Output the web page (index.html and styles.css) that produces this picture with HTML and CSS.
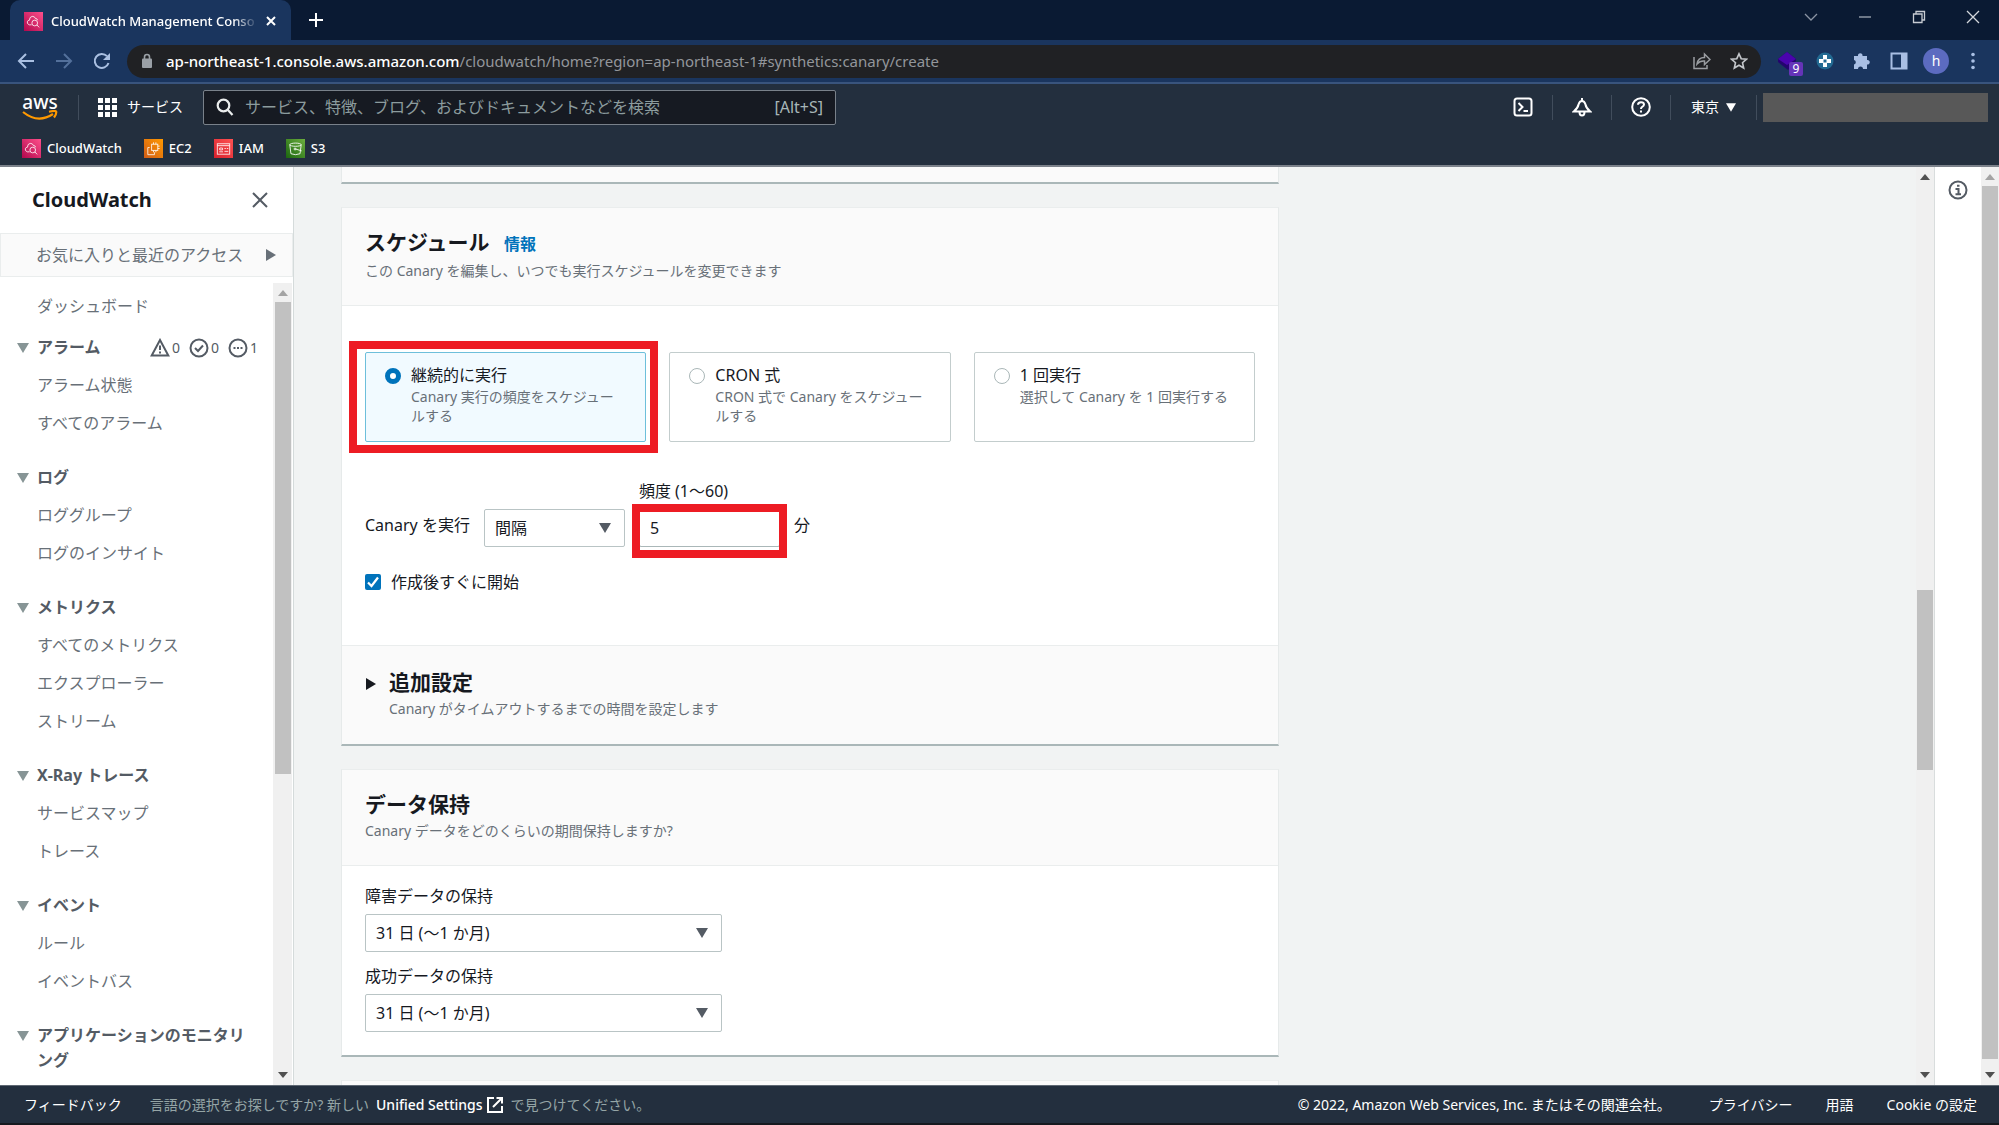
FILE: index.html
```html
<!DOCTYPE html>
<html lang="ja">
<head>
<meta charset="utf-8">
<meta name="viewport" content="width=device-width, initial-scale=1">
<title>CloudWatch Management Console</title>
<link rel="stylesheet" href="styles.css">
</head>
<body>
<svg class="defs" width="0" height="0" aria-hidden="true">
  <defs>
    <linearGradient id="g-pink" x1="0" y1="1" x2="1" y2="0"><stop offset="0" stop-color="#b0084d"/><stop offset="1" stop-color="#ff4f8b"/></linearGradient>
    <linearGradient id="g-orange" x1="0" y1="1" x2="1" y2="0"><stop offset="0" stop-color="#d05c17"/><stop offset="1" stop-color="#ff9900"/></linearGradient>
    <linearGradient id="g-red" x1="0" y1="1" x2="1" y2="0"><stop offset="0" stop-color="#d6202c"/><stop offset="1" stop-color="#ff5252"/></linearGradient>
    <linearGradient id="g-green" x1="0" y1="1" x2="1" y2="0"><stop offset="0" stop-color="#1b660f"/><stop offset="1" stop-color="#6cae3e"/></linearGradient>
    <symbol id="i-cloudwatch" viewBox="0 0 20 20">
      <rect width="20" height="20" fill="url(#g-pink)"/>
      <g fill="none" stroke="#fff" stroke-opacity=".85" stroke-width="1"><path d="M8 13.500H5.500Q3 12.500 3.500 10.300Q4 8.600 5.800 8.600Q5.600 5.200 8.600 4.600Q11.300 4.400 12.200 7Q14 6.600 14.300 8.700"/><circle cx="11.300" cy="11.600" r="3"/><path d="M13.600 13.600L16 16.200"/></g>
    </symbol>
    <symbol id="i-ec2" viewBox="0 0 20 20">
      <rect width="20" height="20" fill="url(#g-orange)"/>
      <g fill="none" stroke="#fff" stroke-opacity=".85"><rect x="8" y="5.500" width="6.500" height="6.500"/><path d="M6 9H4V16.500H11V14M10 3.500V5.500M12.500 3.500V5.500M14.500 7.500H16.500M14.500 10H16.500M10 12V14M12.500 12V14"/></g>
    </symbol>
    <symbol id="i-iam" viewBox="0 0 20 20">
      <rect width="20" height="20" fill="url(#g-red)"/>
      <g fill="none" stroke="#fff" stroke-opacity=".85"><rect x="3.500" y="5" width="13" height="11"/><path d="M3.500 7H16.500M6 9.500H9V11.500H6ZM5.500 13.500H9.500M11 10H12.500M13.500 10H15M11 13H15"/></g>
    </symbol>
    <symbol id="i-s3" viewBox="0 0 20 20">
      <rect width="20" height="20" fill="url(#g-green)"/>
      <g fill="none" stroke="#fff" stroke-opacity=".9"><ellipse cx="10" cy="6" rx="6" ry="1.700"/><path d="M4 6L5.200 15.500Q10 17.500 14.800 15.500L16 6M10 10.500L16.500 12.500"/><circle cx="9.500" cy="10.500" r="1"/></g>
    </symbol>
    <symbol id="i-down" viewBox="0 0 12 10"><path d="M0 0H12L6 10Z" fill="currentColor"/></symbol>
    <symbol id="i-right" viewBox="0 0 10 12"><path d="M0 0V12L10 6Z" fill="currentColor"/></symbol>
    <symbol id="i-sbup" viewBox="0 0 10 6"><path d="M5 0L10 6H0Z" fill="currentColor"/></symbol>
    <symbol id="i-sbdown" viewBox="0 0 10 6"><path d="M5 6L10 0H0Z" fill="currentColor"/></symbol>
  </defs>
</svg>

<header class="browser">
  <div class="tabstrip">
    <div class="tab">
      <svg width="19" height="19"><use href="#i-cloudwatch"/></svg>
      <span class="tab-title">CloudWatch Management Conso</span>
      <button class="plain" aria-label="タブを閉じる"><svg width="10" height="10" viewBox="0 0 10 10" stroke="#fff" stroke-width="2"><path d="M1 1L9 9M9 1L1 9"/></svg></button>
    </div>
    <button class="plain newtab" aria-label="新しいタブ"><svg width="14" height="14" viewBox="0 0 14 14" stroke="#fff" stroke-width="2"><path d="M7 0V14M0 7H14"/></svg></button>
    <div class="winbtns">
      <button class="plain" aria-label="タブを検索"><svg width="14" height="14" viewBox="0 0 14 14" fill="none" stroke="#8b94a4" stroke-width="1.300"><path d="M1 4L7 10L13 4"/></svg></button>
      <button class="plain" aria-label="最小化"><svg width="14" height="14" viewBox="0 0 14 14" stroke="#a3aab5" stroke-width="1.300"><path d="M1 7H13"/></svg></button>
      <button class="plain" aria-label="元に戻す"><svg width="14" height="14" viewBox="0 0 14 14" fill="none" stroke="#c8ccd3" stroke-width="1.300"><path d="M1.500 4H10V12.500H1.500ZM4 4V1.500H12.500V10H10"/></svg></button>
      <button class="plain" aria-label="閉じる"><svg width="14" height="14" viewBox="0 0 14 14" stroke="#d4d7dc" stroke-width="1.300"><path d="M1 1L13 13M13 1L1 13"/></svg></button>
    </div>
  </div>
  <div class="toolbar">
    <button class="plain" aria-label="戻る"><svg width="18" height="18" viewBox="0 0 18 18" fill="none" stroke="#aac0e2" stroke-width="2"><path d="M17 9H3M9 2L2 9L9 16"/></svg></button>
    <button class="plain" aria-label="進む"><svg width="18" height="18" viewBox="0 0 18 18" fill="none" stroke="#53709b" stroke-width="2"><path d="M1 9H15M9 2L16 9L9 16"/></svg></button>
    <button class="plain" aria-label="再読み込み"><svg width="18" height="18" viewBox="0 0 18 18"><path d="M15.500 11A7 7 0 1 1 14 4.200" fill="none" stroke="#aac0e2" stroke-width="2"/><path d="M17 1V8H10Z" fill="#aac0e2"/></svg></button>
    <div class="omnibox">
      <svg width="12" height="16" viewBox="0 0 12 16"><rect x="1" y="5.500" width="10" height="9.500" rx="1" fill="#9aa0a6"/><path d="M3.500 6V4A2.500 2.500 0 0 1 8.500 4V6" fill="none" stroke="#9aa0a6" stroke-width="1.600"/></svg>
      <span class="url"><span class="host">ap-northeast-1.console.aws.amazon.com</span>/cloudwatch/home?region=ap-northeast-1#synthetics:canary/create</span>
      <button class="plain" aria-label="共有"><svg width="18" height="18" viewBox="0 0 18 18" fill="none" stroke="#9a9da1" stroke-width="1.500"><path d="M1 5V16.500H14V13M4 12Q5 5.500 11.500 5.500V2L17 7.500L11.500 12.500V9Q7 8.500 4 12Z"/></svg></button>
      <button class="plain" aria-label="ブックマーク"><svg width="18" height="18" viewBox="0 0 18 18" fill="none" stroke="#c3c6ca" stroke-width="1.600"><path d="M9 1.800L11.200 6.700L16.500 7.200L12.500 10.700L13.700 16L9 13.200L4.300 16L5.500 10.700L1.500 7.200L6.800 6.700Z"/></svg></button>
    </div>
    <div class="exts">
      <span class="ext"><svg width="20" height="20" viewBox="0 0 20 20"><path d="M1 8L10 1L19 8L19 10L11 19L1 11Z" fill="#24046e"/><path d="M1 8L10 1L19 8L10 14Z" fill="#4a04ae"/></svg><span class="ext-badge">9</span></span>
      <svg width="18" height="18" viewBox="0 0 18 18"><circle cx="9" cy="9" r="8.500" fill="#236a92"/><path d="M7 3H11V7H15V11H11V15H7V11H3V7H7Z" fill="#fff"/><rect x="7.500" y="7.500" width="3" height="3" fill="#236a92"/></svg>
      <svg width="18" height="18" viewBox="0 0 18 18" fill="#a9bfe4"><path d="M1 4H5A2.300 2.300 0 1 1 9.500 4H14V8A2.300 2.300 0 1 1 14 12.500V17H10A2.500 2.500 0 0 0 5 17H1V12.500A2.300 2.300 0 0 0 1 8Z"/></svg>
      <svg width="18" height="18" viewBox="0 0 18 18"><rect x="1.500" y="1.500" width="15" height="15" fill="none" stroke="#a9bfe4" stroke-width="2"/><rect x="11" y="1" width="6" height="16" fill="#a9bfe4"/></svg>
      <span class="avatar">h</span>
      <svg width="18" height="18" viewBox="0 0 18 18" fill="#a9bfe4"><circle cx="9" cy="2.500" r="1.800"/><circle cx="9" cy="9" r="1.800"/><circle cx="9" cy="15.500" r="1.800"/></svg>
    </div>
  </div>
</header>

<nav class="awsnav">
  <div class="navrow">
    <a class="logo" href="#"><span>aws</span><svg width="36" height="11" viewBox="0 0 36 11" fill="none" stroke="#f90" stroke-width="2.200"><path d="M1 2Q16 14 31 4M27 1.800Q34 .2 34.200 1.800Q34.600 4 32 7.500"/></svg></a>
    <span class="vr"></span>
    <button class="plain services"><svg width="19" height="19" viewBox="0 0 19 19" fill="#fff"><path d="M0 0H5V5H0ZM7 0H12V5H7ZM14 0H19V5H14ZM0 7H5V12H0ZM7 7H12V12H7ZM14 7H19V12H14ZM0 14H5V19H0ZM7 14H12V19H7ZM14 14H19V19H14Z"/></svg>サービス</button>
    <label class="search">
      <svg width="18" height="18" viewBox="0 0 18 18" fill="none" stroke="#eaeded" stroke-width="2.200"><circle cx="7.500" cy="7.500" r="5.800"/><path d="M11.500 11.500L16.500 17"/></svg>
      <input type="search" aria-label="検索" placeholder="サービス、特徴、ブログ、およびドキュメントなどを検索">
      <span>[Alt+S]</span>
    </label>
    <div class="navtools">
      <button class="plain" aria-label="CloudShell"><svg width="20" height="20" viewBox="0 0 20 20" fill="none" stroke="#fff" stroke-width="2"><rect x="1.500" y="1.500" width="17" height="17" rx="2.500"/><path d="M5.500 6L9.500 10L5.500 14M10.500 14H15"/></svg></button>
      <span class="vr"></span>
      <button class="plain" aria-label="通知"><svg width="20" height="20" viewBox="0 0 20 20" fill="none" stroke="#fff" stroke-width="2"><path d="M1.800 14.500Q6 11 6.500 7.500Q7.500 4 10 4Q12.500 4 13.500 7.500Q14 11 18.200 14.500ZM10 1V4M7.500 15Q7.500 18.500 10 18.500Q12.500 18.500 12.500 15"/></svg></button>
      <span class="vr"></span>
      <button class="plain" aria-label="ヘルプ"><svg width="20" height="20" viewBox="0 0 20 20" fill="none" stroke="#fff" stroke-width="2"><circle cx="10" cy="10" r="8.800"/><path d="M7 7.800Q7 5.200 10 5.200Q13 5.200 13 7.600Q13 9 11.200 9.800Q10 10.400 10 12M10 13.500V15.500"/></svg></button>
      <span class="vr"></span>
      <button class="plain region">東京<svg width="10" height="9"><use href="#i-down"/></svg></button>
      <span class="vr"></span>
      <span class="account"></span>
    </div>
  </div>
  <div class="favs">
    <a href="#"><svg width="19" height="19"><use href="#i-cloudwatch"/></svg>CloudWatch</a>
    <a href="#"><svg width="19" height="19"><use href="#i-ec2"/></svg>EC2</a>
    <a href="#"><svg width="19" height="19"><use href="#i-iam"/></svg>IAM</a>
    <a href="#"><svg width="19" height="19"><use href="#i-s3"/></svg>S3</a>
  </div>
</nav>

<div class="workspace">
  <aside class="side">
    <div class="side-head"><a href="#">CloudWatch</a><button class="plain" aria-label="ナビゲーションを閉じる"><svg width="16" height="16" viewBox="0 0 16 16" stroke="#545b64" stroke-width="2"><path d="M1 1L15 15M15 1L1 15"/></svg></button></div>
    <button class="side-recent">お気に入りと最近のアクセス<svg width="10" height="12"><use href="#i-right"/></svg></button>
    <div class="side-scroll">
      <div class="side-list">
        <a class="dash" href="#">ダッシュボード</a>
        <section>
          <h3><svg width="12" height="10"><use href="#i-down"/></svg><span>アラーム</span>
            <span class="counts">
              <svg width="20" height="19" viewBox="0 0 20 19" fill="none" stroke="#545b64" stroke-width="2"><path d="M10 2L18.300 17.500H1.700ZM10 7.500V12M10 13.500V15.500"/></svg><b>0</b>
              <svg width="20" height="20" viewBox="0 0 20 20" fill="none" stroke="#545b64" stroke-width="2"><circle cx="10" cy="10" r="8.500"/><path d="M6 10L9 13L14 7.500"/></svg><b>0</b>
              <svg width="20" height="20" viewBox="0 0 20 20" fill="none" stroke="#545b64" stroke-width="2"><circle cx="10" cy="10" r="8.500"/><path d="M5.500 10H7.500M9 10H11M12.500 10H14.500"/></svg><b>1</b>
            </span></h3>
          <a href="#">アラーム状態</a><a href="#">すべてのアラーム</a>
        </section>
        <section><h3><svg width="12" height="10"><use href="#i-down"/></svg><span>ログ</span></h3><a href="#">ロググループ</a><a href="#">ログのインサイト</a></section>
        <section><h3><svg width="12" height="10"><use href="#i-down"/></svg><span>メトリクス</span></h3><a href="#">すべてのメトリクス</a><a href="#">エクスプローラー</a><a href="#">ストリーム</a></section>
        <section><h3><svg width="12" height="10"><use href="#i-down"/></svg><span>X-Ray トレース</span></h3><a href="#">サービスマップ</a><a href="#">トレース</a></section>
        <section><h3><svg width="12" height="10"><use href="#i-down"/></svg><span>イベント</span></h3><a href="#">ルール</a><a href="#">イベントバス</a></section>
        <section><h3><svg width="12" height="10"><use href="#i-down"/></svg><span>アプリケーションのモニタリング</span></h3></section>
      </div>
      <div class="scrollbar sb-side"><svg class="off" width="10" height="6"><use href="#i-sbup"/></svg><i class="thumb"></i><i class="rest"></i><svg width="10" height="6"><use href="#i-sbdown"/></svg></div>
    </div>
  </aside>

  <main class="main">
    <form class="cards">
      <div class="card card-prev"></div>

      <section class="card">
        <div class="card-head"><h2>スケジュール <a href="#">情報</a></h2><p>この Canary を編集し、いつでも実行スケジュールを変更できます</p></div>
        <div class="card-body schedule">
          <div class="tiles">
            <div class="marked">
              <label class="tile"><input type="radio" name="mode" checked><span><strong>継続的に実行</strong><small>Canary 実行の頻度をスケジュールする</small></span></label>
              <i class="mark mark-tile"></i>
            </div>
            <label class="tile"><input type="radio" name="mode"><span><strong>CRON 式</strong><small>CRON 式で Canary をスケジュールする</small></span></label>
            <label class="tile"><input type="radio" name="mode"><span><strong>1 回実行</strong><small>選択して Canary を 1 回実行する</small></span></label>
          </div>
          <div class="freq">
            <label class="aside" for="every">Canary を実行</label>
            <span class="select"><select id="every"><option>間隔</option></select><svg width="12" height="10"><use href="#i-down"/></svg></span>
            <div class="field"><label for="rate">頻度 (1～60)</label>
              <div class="marked"><input class="text" id="rate" type="text" value="5"><i class="mark mark-input"></i></div></div>
            <span class="aside">分</span>
          </div>
          <label class="check"><input type="checkbox" checked><svg width="16" height="16" viewBox="0 0 16 16" fill="none" stroke="#fff" stroke-width="2.200"><path d="M3 8.500L6.500 12L13 3.500"/></svg><span>作成後すぐに開始</span></label>
        </div>
        <div class="card-foot"><svg width="10" height="12"><use href="#i-right"/></svg><div><h2>追加設定</h2><p>Canary がタイムアウトするまでの時間を設定します</p></div></div>
      </section>

      <section class="card">
        <div class="card-head"><h2>データ保持</h2><p>Canary データをどのくらいの期間保持しますか?</p></div>
        <div class="card-body retention">
          <label for="fail">障害データの保持</label>
          <span class="select"><select id="fail"><option>31 日 (～1 か月)</option></select><svg width="12" height="10"><use href="#i-down"/></svg></span>
          <label for="ok">成功データの保持</label>
          <span class="select"><select id="ok"><option>31 日 (～1 か月)</option></select><svg width="12" height="10"><use href="#i-down"/></svg></span>
        </div>
      </section>
      <div class="card card-next"></div>
    </form>
  </main>
  <div class="scrollbar sb-main"><svg width="10" height="6"><use href="#i-sbup"/></svg><i class="lead"></i><i class="thumb"></i><i class="rest"></i><svg width="10" height="6"><use href="#i-sbdown"/></svg></div>
  <aside class="info"><button class="plain" aria-label="情報"><svg width="20" height="20" viewBox="0 0 20 20" fill="none" stroke="#545b64" stroke-width="2"><circle cx="10" cy="10" r="8.500"/><path d="M7.500 9H10.500V14M7.500 14.200H13M9 5.800H11.500"/></svg></button></aside>
  <div class="scrollbar sb-page"><svg class="off" width="10" height="6"><use href="#i-sbup"/></svg><i class="thumb"></i><i class="rest"></i><svg width="10" height="6"><use href="#i-sbdown"/></svg></div>
</div>

<footer class="foot">
  <a href="#">フィードバック</a>
  <p>言語の選択をお探しですか? 新しい <a class="unified" href="#">Unified Settings<svg width="18" height="18" viewBox="0 0 18 18" fill="none" stroke="#fff" stroke-width="2"><path d="M8 2H2V16H16V10M10.500 2H16V7.500M16 2L7 11"/></svg></a> で見つけてください。</p>
  <span class="copy">© 2022, Amazon Web Services, Inc. またはその関連会社。</span>
  <a class="privacy" href="#">プライバシー</a>
  <a href="#">用語</a>
  <a href="#">Cookie の設定</a>
</footer>
</body>
</html>
```

FILE: styles.css
```css
* { box-sizing: border-box; }
body {
  margin: 0;
  height: 100vh;
  display: flex;
  flex-direction: column;
  overflow: hidden;
  border-bottom: 2px solid #16191f;
  font: 16px/24px "Noto Sans", "Noto Sans CJK JP", sans-serif;
  color: #16191f;
}
svg { display: block; flex: none; }
.defs { position: absolute; }
a { text-decoration: none; color: inherit; }
h2, h3, p { margin: 0; }
input, select, button { font: inherit; color: inherit; margin: 0; }
.plain { border: 0; padding: 0; background: none; display: flex; align-items: center; }

/* browser frame */
.tabstrip { height: 40px; background: #0a1a33; display: flex; align-items: center; padding-left: 10px; }
.tab {
  width: 281px; height: 40px; padding: 2px 15px 0 14px;
  display: flex; align-items: center; gap: 8px;
  background: #1a355e; border-radius: 10px 10px 0 0; color: #fff;
}
.tab-title {
  flex: 1; min-width: 0; font-size: 13px; font-weight: 500; white-space: nowrap;
  mask-image: linear-gradient(90deg, #000 88%, transparent);
}
.newtab { margin-left: 18px; }
.winbtns { margin-left: auto; display: flex; gap: 40px; padding: 0 19px 6px 0; }
.toolbar {
  height: 44px; background: #1a355e; border-bottom: 2px solid #39547d;
  display: flex; align-items: center; padding: 0 17px; gap: 20px;
}
.omnibox {
  flex: 1; height: 33px; border-radius: 17px; background: #202124;
  display: flex; align-items: center; gap: 19px; padding: 0 13px 0 14px; margin-left: -4px;
}
.url { flex: 1; margin-left: -6px; color: #93969b; white-space: nowrap; font-size: 15px; }
.host { color: #fff; font-weight: 500; }
.exts { display: flex; align-items: center; gap: 19px; margin-left: -4px; }
.exts .avatar { margin: 0 -4px; }
.ext { position: relative; }
.ext-badge {
  position: absolute; left: 12px; top: 11px; width: 14px; height: 14px; border-radius: 2px;
  background: #6534b8; color: #fff; font-size: 12px; line-height: 14px; text-align: center;
}
.avatar { width: 26px; height: 26px; border-radius: 50%; background: #5c6bc0; color: #fff; font-size: 14px; line-height: 25px; text-align: center; }

/* AWS navigation */
.awsnav { height: 83px; flex: none; background: #232f3e; border-bottom: 2px solid #7b818a; color: #fff; font-size: 14px; }
.navrow { height: 46px; display: flex; align-items: center; padding: 0 11px 0 22px; }
.logo { display: flex; flex-direction: column; width: 36px; font-size: 19px; font-weight: 500; line-height: 16px; text-align: center; }
.vr { width: 1px; height: 25px; background: #414d5c; }
.logo + .vr { margin: 0 19px 0 20px; }
.services { gap: 10px; }
.search {
  width: 633px; height: 35px; margin-left: 20px; padding: 0 12px;
  display: flex; align-items: center; gap: 11px;
  background: #161a22; border: 1px solid #79818a; border-radius: 2px; color: #a7b6b8; font-size: 16px;
}
.search input { flex: 1; min-width: 0; border: 0; padding: 0; background: none; outline: 0; }
.search input::placeholder { color: #8c9c9e; opacity: 1; }
.navtools { margin-left: auto; display: flex; align-items: center; }
.navtools .plain { width: 58px; justify-content: center; }
.navtools .region { width: 85px; gap: 7px; }
.account { width: 225px; height: 29px; margin-left: 6px; background: #585858; }
.favs { display: flex; gap: 22px; padding: 6px 22px; font-size: 13px; font-weight: 500; }
.favs a { display: flex; align-items: center; gap: 6px; }

/* workspace */
.workspace { flex: 1; min-height: 0; display: flex; background: #f1f3f3; }
.side { width: 294px; flex: none; display: flex; flex-direction: column; background: #fff; border-right: 1px solid #d5dbdb; color: #545b64; }
.side-head { display: flex; justify-content: space-between; align-items: center; height: 66px; padding: 0 25px 0 32px; color: #16191f; font-size: 20px; font-weight: 700; }
.side-recent {
  display: flex; justify-content: space-between; align-items: center; height: 44px; padding: 0 16px 0 35px;
  border: 1px solid #eaeded; background: #fafafa; color: #687078;
}
.side-scroll { flex: 1; min-height: 0; display: flex; margin-top: 6px; }
.side-list { flex: 1; overflow: hidden; padding: 11px 15px 0 17px; }
.side-list a { display: block; margin: 13px 0 0 20px; line-height: 25px; color: #687078; }
.side-list .dash { margin-top: 0; }
.side-list section { margin-top: 29px; }
.side-list .dash + section { margin-top: 16px; }
.side-list h3 { display: flex; font-size: 16px; line-height: 25px; }
.side-list h3 > svg { margin: 8px 8px 0 0; color: #879596; }
.counts { margin-left: auto; display: flex; align-items: center; gap: 2px; }
.counts b { width: 15px; font-size: 14px; font-weight: 400; }
.counts b:last-child { width: 8px; }

.scrollbar { width: 18px; flex: none; display: flex; flex-direction: column; align-items: center; padding: 7px 0; background: #f0f0f0; color: #505050; }
.scrollbar .off { color: #a3a3a3; }
.scrollbar .thumb { width: 16px; background: #c1c1c1; }
.scrollbar > svg:first-child { margin-bottom: 6px; }
.sb-side { width: 20px; border-right: 1px solid #fff; }
.sb-side .thumb { flex: 472; }
.sb-side .rest { flex: 298; }
.sb-main .lead { flex: 404; }
.sb-main .thumb { flex: 180; }
.sb-main .rest { flex: 302; }
.sb-page .thumb { flex: 873; }
.sb-page .rest { flex: 13; }
.info { width: 47px; flex: none; background: #fff; border-left: 1px solid #d9dddd; padding: 13px; }

/* content cards */
.main { flex: 1; min-width: 0; overflow: hidden; padding-left: 47px; }
.cards { max-width: 938px; display: flex; flex-direction: column; gap: 23px; }
.card { background: #fff; border: 1px solid #e6eaea; border-top-color: #eaeded; border-bottom: 2px solid #aab7b8; }
.card-prev { height: 17px; background: #fafafa; border-top: 0; }
.card-next { height: 80px; background: #fafafa; }
.card-head { padding: 21px 23px 22px; background: #fafafa; border-bottom: 1px solid #eaeded; }
h2 { font-size: 21px; line-height: 26px; }
h2 a { font-size: 16px; margin-left: 9px; color: #0073bb; }
.card p { font-size: 14px; line-height: 20px; padding-top: 4px; color: #687078; height: 26px; }
.schedule { padding: 46px 23px 51px; }
.tiles { display: grid; grid-template-columns: repeat(3, 1fr); gap: 23px; }
.marked { position: relative; display: grid; }
.mark { position: absolute; border: 8px solid #ed1c24; pointer-events: none; }
.mark-tile { inset: -11px -12px -11px -16px; }
.mark-input { inset: -5px -7px -11px; }
.tile {
  display: flex; gap: 10px; min-height: 90px; padding: 10px 22px 8px 19px;
  border: 1px solid #c3cdcd; border-radius: 2px; background: #fff;
}
.tile:has(:checked) { background: #f1faff; border-color: #6dbfdb; }
.tile input {
  appearance: none; flex: none; width: 16px; height: 16px; margin-top: 5px;
  border: 1px solid #aab7b8; border-radius: 50%; background: #fff;
}
.tile input:checked { border: 5px solid #0073bb; }
.tile strong { display: block; font-weight: 400; line-height: 24px; }
.tile small { display: block; font-size: 14px; line-height: 19px; color: #687078; word-break: break-all; }
.freq { display: flex; align-items: flex-end; gap: 14px; margin-top: 37px; }
.aside { padding-bottom: 10px; }
.field label { display: block; line-height: 24px; margin-bottom: 6px; }
.text { width: 141px; height: 38px; padding: 0 10px; border: 1px solid #aab7b8; border-radius: 2px; outline: 0; }
.select { display: grid; align-items: center; }
.select > * { grid-area: 1 / 1; }
.select svg { justify-self: end; margin-right: 14px; pointer-events: none; color: #545b64; }
.select select { appearance: none; height: 38px; padding: 0 10px; border: 1px solid #b9c4c5; border-radius: 2px; background: #fff; outline: 0; }
.freq .select { width: 141px; }
.check { display: flex; align-items: center; gap: 10px; margin-top: 23px; }
.check input { appearance: none; width: 16px; height: 16px; border-radius: 2px; background: #0073bb; }
.check svg { margin-left: -26px; }
.card-foot { display: flex; gap: 13px; padding: 23px 24px; border-top: 1px solid #eaeded; background: #fafafa; }
.card-foot > svg { margin-top: 9px; }
.retention { display: flex; flex-direction: column; padding: 18px 23px 23px; }
.retention .select { width: 357px; margin: 6px 0 12px; }
.retention .select:last-child { margin-bottom: 0; }

/* footer */
.foot { height: 38px; flex: none; display: flex; align-items: center; padding: 0 22px 0 24px; background: #232f3e; border-top: 1px solid #5f6873; color: #fff; font-size: 14px; white-space: nowrap; }
.foot p { margin-left: 28px; display: flex; gap: 7px; color: #95a5a6; }
.unified { display: flex; align-items: center; gap: 3px; color: #fff; font-weight: 500; }
.copy { margin-left: auto; }
.privacy { margin-left: 38px; }
.privacy ~ a { margin-left: 33px; }
```
